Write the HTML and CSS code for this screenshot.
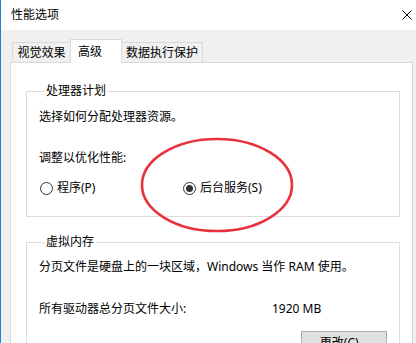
FILE: index.html
```html
<!DOCTYPE html>
<html lang="zh-CN">
<head>
<meta charset="utf-8">
<title>性能选项</title>
<link rel="stylesheet" href="styles.css">
</head>
<body>
<div class="window">
  <div class="titlebar">
    <span class="title">性能选项</span>
    <svg class="close" width="10" height="10" viewBox="0 0 10 10"><path d="M0.5 0.5 L9.5 9.5 M9.5 0.5 L0.5 9.5" stroke="#000" stroke-width="1" fill="none"/></svg>
  </div>
  <div class="body">
    <div class="tabs">
      <div class="tab t1">视觉效果</div>
      <div class="tab active">高级</div>
      <div class="tab t3">数据执行保护</div>
    </div>
    <div class="panel">
      <fieldset class="group g1">
        <legend>处理器计划</legend>
        <p class="line l1">选择如何分配处理器资源。</p>
        <p class="line l2">调整以优化性能:</p>
        <div class="radios">
          <label class="radio"><span class="dot"></span>程序(P)</label>
          <label class="radio"><span class="dot checked"></span>后台服务(S)</label>
        </div>
      </fieldset>
      <fieldset class="group g2">
        <legend>虚拟内存</legend>
        <p class="line l3">分页文件是硬盘上的一块区域，Windows 当作 RAM 使用。</p>
        <div class="size"><span>所有驱动器总分页文件大小:</span><span>1920 MB</span></div>
        <div class="btnrow"><button class="btn">更改(C)...</button></div>
      </fieldset>
    </div>
  </div>
  <svg class="ellipse" width="156" height="98" viewBox="0 0 156 98"><ellipse cx="78" cy="49" rx="75" ry="46" fill="none" stroke="#e8323b" stroke-width="2.6"/></svg>
</div>
</body>
</html>
```
FILE: styles.css
```css
* { box-sizing: border-box; }
html, body { margin: 0; padding: 0; }
body {
  width: 416px;
  height: 343px;
  overflow: hidden;
  background: #f0f0f0;
  font-family: "Noto Sans", "Noto Sans CJK SC", sans-serif;
  font-size: 12px;
  line-height: 16px;
  color: #000;
}
.window {
  position: relative;
  width: 416px;
  height: 343px;
  border-left: 1px solid #1883d7;
  background: #f0f0f0;
  overflow: hidden;
}
.titlebar {
  height: 30px;
  background: #fff;
  display: flex;
  align-items: center;
  padding-left: 10px;
  padding-right: 4px;
}
.title { flex: 1; }
.close { display: block; margin-bottom: 1px; }
.body {
  padding: 9px 3px 0 9px;
}
.tabs {
  display: flex;
  align-items: flex-end;
  height: 23px;
  padding-left: 2px;
}
.tab {
  height: 20px;
  border: 1px solid #d9d9d9;
  border-bottom: none;
  background: #f0f0f0;
  line-height: 18px;
  padding-top: 1px;
  text-align: center;
}
.t1 { width: 59px; }
.t3 { width: 82px; margin-left: -1px; }
.tab.active {
  position: relative;
  z-index: 1;
  height: 24px;
  width: 52px;
  margin-bottom: -1px;
  margin-left: -1px;
  background: #fff;
  text-align: left;
  padding-left: 7px;
  padding-top: 3px;
}
.panel {
  background: #fff;
  border: 1px solid #d9d9d9;
  border-bottom: none;
  height: 290px;
  padding-top: 20px;
}
.group {
  margin: 0 12px 0 15px;
  padding: 0 12px;
  border: 1px solid #dcdcdc;
  min-width: 0;
}
.group legend {
  margin-left: 5px;
  padding: 0 2px;
  line-height: 16px;
}
.line { margin: 0; }
.l1 { margin-top: 10px; }
.l2 { margin-top: 25px; }
.radios {
  display: grid;
  grid-template-columns: 143px auto;
  margin-top: 14px;
  margin-left: 1px;
  padding-bottom: 20px;
}
.radio {
  display: flex;
  align-items: center;
  gap: 4px;
  height: 16px;
}
.dot {
  width: 13px;
  height: 13px;
  border: 1px solid #333;
  border-radius: 50%;
  display: flex;
  align-items: center;
  justify-content: center;
  background: #fff;
}
.dot.checked::after {
  content: "";
  width: 7px;
  height: 7px;
  border-radius: 50%;
  background: #333;
}
.g2 { margin-top: 17px; padding-bottom: 20px; }
.l3 { margin-top: 9px; }
.size {
  display: grid;
  grid-template-columns: 233px auto;
  margin-top: 26px;
}
.btnrow {
  display: flex;
  justify-content: flex-end;
  margin-top: 14px;
}
.btn {
  width: 86px;
  height: 23px;
  border: 1px solid #adadad;
  background: #e1e1e1;
  font: inherit;
  color: #000;
  padding: 0;
}
.ellipse {
  position: absolute;
  left: 138px;
  top: 136px;
}
```
